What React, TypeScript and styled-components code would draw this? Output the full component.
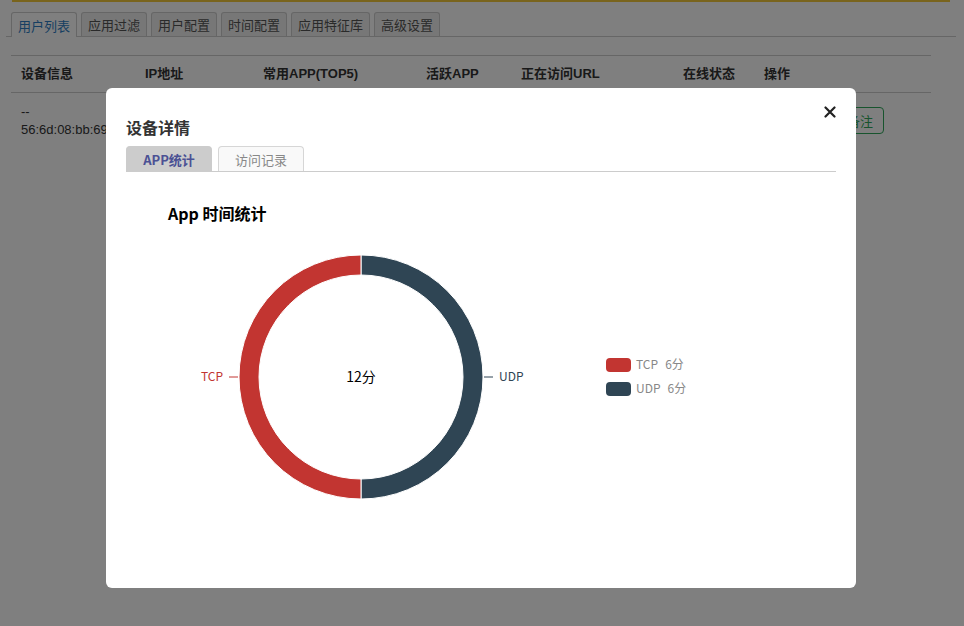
import React from "react";
import styled, { createGlobalStyle } from "styled-components";

const GlobalStyle = createGlobalStyle`
  html, body {
    margin: 0;
    padding: 0;
    background: #fff;
    font-family: "Liberation Sans", "Noto Sans CJK SC", sans-serif;
    color: #333;
  }
`;

const Page = styled.div`
  width: 964px;
  height: 626px;
  position: relative;
  overflow: hidden;
`;

const TopRule = styled.div`
  margin: 0 14px 0 12px;
  height: 2px;
  background: #f2c93a;
`;

const TabBar = styled.div`
  display: flex;
  gap: 4px;
  margin: 10px 8px 0 6px;
  padding-left: 5px;
  border-bottom: 1px solid #ccc;
`;

const PageTab = styled.div<{ $active?: boolean }>`
  padding: 0 6px;
  display: flex;
  align-items: center;
  font-size: 13px;
  font-family: "Noto Sans CJK SC", sans-serif;
  border: 1px solid #ccc;
  border-bottom: none;
  border-radius: 3px 3px 0 0;
  background: ${(p) => (p.$active ? "#fff" : "#eee")};
  color: ${(p) => (p.$active ? "#2f7fc4" : "#555")};
  margin-bottom: ${(p) => (p.$active ? "-1px" : "0")};
  height: ${(p) => (p.$active ? "24px" : "23px")};
`;

const Table = styled.div`
  margin: 18px 0 0 11px;
  width: 920px;
  border-top: 1px solid #ccc;
`;

const Row = styled.div<{ $head?: boolean }>`
  display: grid;
  grid-template-columns: 124px 118px 163px 95px 162px 81px 1fr;
  align-items: center;
  min-height: ${(p) => (p.$head ? "36px" : "55px")};
  border-bottom: ${(p) => (p.$head ? "1px solid #ccc" : "none")};
  font-size: 13px;
  font-weight: ${(p) => (p.$head ? 700 : 400)};
  color: #333;
`;

const Cell = styled.div`
  padding-left: 10px;
  line-height: 18px;
  white-space: nowrap;
  overflow: hidden;
`;

const Actions = styled.div`
  padding-left: 10px;
  display: flex;
  gap: 24px;
`;

const OutlineButton = styled.div`
  width: 46px;
  height: 25px;
  border: 1px solid #2ea85a;
  border-radius: 4px;
  color: #2ea85a;
  font-size: 13px;
  font-family: "Noto Sans CJK SC", sans-serif;
  display: flex;
  align-items: center;
  justify-content: center;
`;

const Overlay = styled.div`
  position: fixed;
  inset: 0;
  background: rgba(0, 0, 0, 0.5);
  display: flex;
  justify-content: flex-start;
  align-items: flex-start;
`;

const Modal = styled.div`
  position: relative;
  margin: 88px 0 0 106px;
  width: 750px;
  height: 500px;
  box-sizing: border-box;
  padding: 29px 20px 0;
  background: #fff;
  border-radius: 6px;
  font-family: "Noto Sans CJK SC", sans-serif;
`;

const ModalTitle = styled.div`
  font-size: 16px;
  line-height: 20px;
  font-weight: 700;
  color: #333;
`;

const CloseButton = styled.div`
  position: absolute;
  top: 18px;
  right: 20px;
  width: 12px;
  height: 12px;
  display: flex;
`;

const DetailTabs = styled.div`
  display: flex;
  gap: 6px;
  margin-top: 9px;
  border-bottom: 1px solid #ccc;
`;

const DetailTab = styled.div<{ $active?: boolean }>`
  width: 86px;
  height: 25px;
  box-sizing: border-box;
  display: flex;
  align-items: center;
  justify-content: center;
  font-size: 13px;
  border-radius: 4px 4px 0 0;
  border: 1px solid ${(p) => (p.$active ? "#ccc" : "#d6d6d6")};
  border-bottom: none;
  background: ${(p) => (p.$active ? "#ccc" : "#f9f9f9")};
  color: ${(p) => (p.$active ? "#4b5194" : "#888")};
  font-weight: ${(p) => (p.$active ? 700 : 400)};
`;

const ChartTitle = styled.div`
  margin: 31px 0 0 42px;
  font-size: 16px;
  line-height: 20px;
  font-weight: 700;
  color: #000;
`;

const ChartSvg = styled.svg`
  display: block;
  font-family: "Noto Sans CJK SC", sans-serif;
`;

const columns = ["设备信息", "IP地址", "常用APP(TOP5)", "活跃APP", "正在访问URL", "在线状态", "操作"];
const pageTabs = ["用户列表", "应用过滤", "用户配置", "时间配置", "应用特征库", "高级设置"];

const slices = [
  { name: "TCP", value: 6, color: "#c23531" },
  { name: "UDP", value: 6, color: "#2f4554" },
];

// donut geometry, relative to the svg box
const CX = 235;
const CY = 154;
const R_OUT = 122;
const R_IN = 102;

const DonutChart: React.FC = () => {
  const total = slices.reduce((s, d) => s + d.value, 0);
  return (
    <ChartSvg width={710} height={340} viewBox="0 0 710 340">
      {/* UDP: right half */}
      <path
        d={`M${CX} ${CY - R_OUT} A${R_OUT} ${R_OUT} 0 0 1 ${CX} ${CY + R_OUT} L${CX} ${CY + R_IN} A${R_IN} ${R_IN} 0 0 0 ${CX} ${CY - R_IN} Z`}
        fill={slices[1].color}
        stroke="#fff"
        strokeWidth={1}
      />
      {/* TCP: left half */}
      <path
        d={`M${CX} ${CY + R_OUT} A${R_OUT} ${R_OUT} 0 0 1 ${CX} ${CY - R_OUT} L${CX} ${CY - R_IN} A${R_IN} ${R_IN} 0 0 0 ${CX} ${CY + R_IN} Z`}
        fill={slices[0].color}
        stroke="#fff"
        strokeWidth={1}
      />

      <line x1={103} y1={CY} x2={112} y2={CY} stroke={slices[0].color} strokeWidth={1} />
      <text x={97} y={CY + 4} textAnchor="end" fontSize={12} fill={slices[0].color}>
        TCP
      </text>
      <line x1={358} y1={CY} x2={367} y2={CY} stroke={slices[1].color} strokeWidth={1} />
      <text x={373} y={CY + 4} fontSize={12} fill={slices[1].color}>
        UDP
      </text>

      <text x={CX} y={CY + 5} textAnchor="middle" fontSize={14} fill="#000">
        {total}分
      </text>

      {slices.map((s, i) => (
        <g key={s.name}>
          <rect x={480} y={135 + i * 24} width={25} height={14} rx={4} fill={s.color} />
          <text x={510} y={146 + i * 24} fontSize={12} fill="#888">
            {s.name}
            <tspan dx={7}>{`${s.value}分`}</tspan>
          </text>
        </g>
      ))}
    </ChartSvg>
  );
};

const App: React.FC = () => {
  return (
    <Page>
      <GlobalStyle />
      <TopRule />
      <TabBar>
        {pageTabs.map((t, i) => (
          <PageTab key={t} $active={i === 0}>
            {t}
          </PageTab>
        ))}
      </TabBar>

      <Table>
        <Row $head>
          {columns.map((c) => (
            <Cell key={c}>{c}</Cell>
          ))}
        </Row>
        <Row>
          <Cell>
            --
            <br />
            56:6d:08:bb:69:1e
          </Cell>
          <Cell>192.168.1.105</Cell>
          <Cell />
          <Cell />
          <Cell />
          <Cell>在线</Cell>
          <Actions>
            <OutlineButton>详情</OutlineButton>
            <OutlineButton>备注</OutlineButton>
          </Actions>
        </Row>
      </Table>

      <Overlay>
        <Modal>
          <ModalTitle>设备详情</ModalTitle>
          <CloseButton>
            <svg width="12" height="12" viewBox="0 0 12 12">
              <path d="M1.5 1.5 L10.5 10.5 M10.5 1.5 L1.5 10.5" stroke="#222" strokeWidth={2.2} strokeLinecap="round" />
            </svg>
          </CloseButton>
          <DetailTabs>
            <DetailTab $active>APP统计</DetailTab>
            <DetailTab>访问记录</DetailTab>
          </DetailTabs>
          <ChartTitle>App 时间统计</ChartTitle>
          <DonutChart />
        </Modal>
      </Overlay>
    </Page>
  );
};

export default App;
